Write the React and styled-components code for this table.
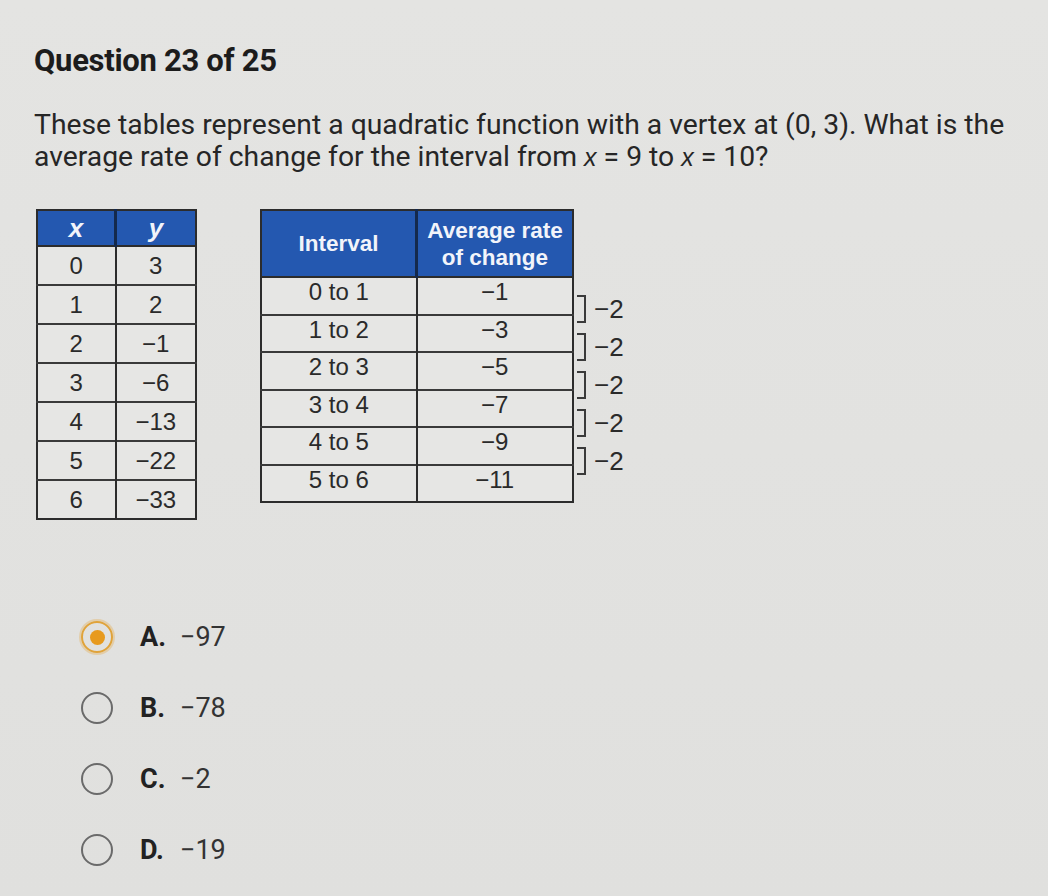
import styled, { createGlobalStyle } from 'styled-components';

const GlobalStyle = createGlobalStyle`
  html, body {
    margin: 0;
    padding: 0;
    background: #e2e2e0;
  }
  body {
    font-family: Roboto, 'Liberation Sans', sans-serif;
    color: #222;
  }
`;

const Page = styled.div`
  width: 1048px;
  height: 896px;
  box-sizing: border-box;
  padding: 42px 0 0 34px;
  background: linear-gradient(180deg, #e4e4e2 0%, #e0e0de 100%);
  overflow: hidden;
`;

const Title = styled.h1`
  margin: 0;
  font-size: 31px;
  font-weight: 700;
  color: #1c1c1c;
  letter-spacing: -0.3px;
`;

const Prompt = styled.p`
  margin: 30px 0 0;
  font-size: 28.3px;
  line-height: 32px;
  color: #262626;
`;

const Var = styled.i`
  font-family: 'Liberation Sans', Arial, sans-serif;
  font-size: 25px;
`;

const TablesRow = styled.div`
  display: flex;
  align-items: flex-start;
  margin: 36px 0 0 2px;
`;

const Table = styled.table`
  border-collapse: collapse;
  font-family: 'Liberation Sans', Arial, sans-serif;
  font-size: 24px;
  color: #2a2a2a;
  border: 2px solid #2c2c2c;
  margin-right: ${(p) => p.gap || 0}px;
`;

const Head = styled.th`
  background: #2458b0;
  color: #f2f4fa;
  font-weight: 700;
  font-size: ${(p) => (p.small ? 22.5 : 26)}px;
  line-height: 27px;
  height: ${(p) => p.h}px;
  width: ${(p) => p.w}px;
  padding: 0;
  border-right: 3px solid #14294c;
  border-bottom: 2px solid #2c2c2c;
  &:last-child {
    border-right: none;
  }
`;

const Cell = styled.td`
  box-sizing: border-box;
  height: ${(p) => p.h}px;
  padding: 0 0 ${(p) => p.lift || 0}px;
  text-align: center;
  border-top: 2px solid #3a3a3a;
  border-right: 2px solid #2c2c2c;
  background: #e6e6e4;
  &:last-child {
    border-right: none;
  }
`;

const Brackets = styled.div`
  display: flex;
  flex-direction: column;
  gap: 10px;
  padding-top: 86px;
  margin-left: 3px;
`;

const Bracket = styled.div`
  display: flex;
  align-items: center;
  height: 28px;
  font-family: 'Liberation Sans', Arial, sans-serif;
  font-size: 26px;
  color: #2a2a2a;
`;

const BracketLine = styled.span`
  box-sizing: border-box;
  width: 9px;
  height: 28px;
  border: 2px solid #3a3a3a;
  border-left: none;
  margin-right: 8px;
`;

const Options = styled.div`
  display: flex;
  flex-direction: column;
  gap: 39px;
  margin: 101px 0 0 47px;
`;

const Option = styled.label`
  display: flex;
  align-items: center;
  height: 32px;
  font-size: 27px;
  color: #333;
`;

const Radio = styled.span`
  width: 28px;
  height: 28px;
  border-radius: 50%;
  border: 2px solid ${(p) => (p.checked ? '#e0a33a' : '#6a6a6a')};
  margin-right: 27px;
  display: flex;
  align-items: center;
  justify-content: center;
  box-shadow: ${(p) => (p.checked ? '0 0 0 2px rgba(230,170,70,0.35)' : 'none')};
  &::after {
    content: '';
    display: ${(p) => (p.checked ? 'block' : 'none')};
    width: 15px;
    height: 15px;
    border-radius: 50%;
    background: #e79a1e;
  }
`;

const Letter = styled.b`
  font-weight: 700;
  color: #222;
  width: 40px;
`;

const xy = [
  [0, '3'],
  [1, '2'],
  [2, '−1'],
  [3, '−6'],
  [4, '−13'],
  [5, '−22'],
  [6, '−33'],
];

const rates = [
  ['0 to 1', '−1'],
  ['1 to 2', '−3'],
  ['2 to 3', '−5'],
  ['3 to 4', '−7'],
  ['4 to 5', '−9'],
  ['5 to 6', '−11'],
];

const answers = [
  { letter: 'A.', text: '−97', checked: true },
  { letter: 'B.', text: '−78' },
  { letter: 'C.', text: '−2' },
  { letter: 'D.', text: '−19' },
];

const App = () => {
  return (
    <Page>
      <GlobalStyle />
      <Title>Question 23 of 25</Title>
      <Prompt>
        These tables represent a quadratic function with a vertex at (0, 3). What is the
        <br />
        average rate of change for the interval from <Var>x</Var> = 9 to <Var>x</Var> = 10?
      </Prompt>

      <TablesRow>
        <Table gap={63}>
          <thead>
            <tr>
              <Head h={34} w={76}>
                <i>x</i>
              </Head>
              <Head h={34} w={78}>
                <i>y</i>
              </Head>
            </tr>
          </thead>
          <tbody>
            {xy.map(([x, y]) => (
              <tr key={x}>
                <Cell h={39}>{x}</Cell>
                <Cell h={39}>{y}</Cell>
              </tr>
            ))}
          </tbody>
        </Table>

        <Table>
          <thead>
            <tr>
              <Head h={65} w={153} small>
                Interval
              </Head>
              <Head h={65} w={154} small>
                Average rate
                <br />
                of change
              </Head>
            </tr>
          </thead>
          <tbody>
            {rates.map(([i, r]) => (
              <tr key={i}>
                <Cell h={37.5} lift={7}>{i}</Cell>
                <Cell h={37.5} lift={7}>{r}</Cell>
              </tr>
            ))}
          </tbody>
        </Table>

        <Brackets>
          {[0, 1, 2, 3, 4].map((n) => (
            <Bracket key={n}>
              <BracketLine />
              −2
            </Bracket>
          ))}
        </Brackets>
      </TablesRow>

      <Options>
        {answers.map((a) => (
          <Option key={a.letter}>
            <Radio checked={a.checked} />
            <Letter>{a.letter}</Letter>
            {a.text}
          </Option>
        ))}
      </Options>
    </Page>
  );
};

export default App;
